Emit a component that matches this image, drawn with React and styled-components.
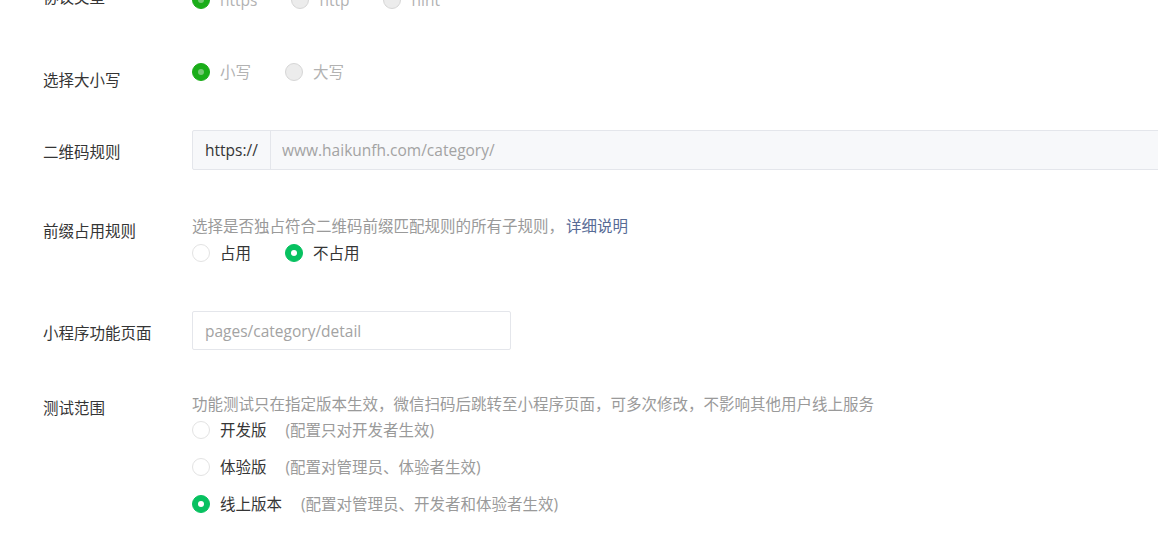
import styled, { createGlobalStyle } from "styled-components";

const GlobalStyle = createGlobalStyle`
  html, body {
    margin: 0;
    padding: 0;
    background: #fff;
    overflow: hidden;
  }
  body {
    font-family: "Open Sans", "Noto Sans CJK SC", sans-serif;
    font-size: 15.5px;
    color: #353535;
  }
`;

const Form = styled.div`
  margin-top: -11px;
  padding-left: 43px;
`;

const Row = styled.div`
  display: flex;
  align-items: flex-start;
  margin-bottom: ${(p) => p.$space || 0}px;
`;

const Label = styled.div`
  width: 149px;
  flex: none;
  line-height: 22px;
  margin-top: ${(p) => p.$offset || 0}px;
  color: #353535;
`;

const Control = styled.div`
  flex: 1;
  min-width: 0;
  display: flex;
  flex-direction: column;
`;

const Options = styled.div`
  display: flex;
  align-items: center;
  height: 22px;
  margin-top: ${(p) => p.$top || 0}px;
`;

const Option = styled.label`
  display: flex;
  align-items: center;
  margin-right: 34px;
  line-height: 22px;
  color: ${(p) => (p.$disabled ? "#b2b2b2" : "#353535")};
`;

const Dot = styled.span`
  box-sizing: border-box;
  position: relative;
  flex: none;
  width: 18px;
  height: 18px;
  margin-right: 10px;
  border-radius: 50%;
  border: 1px solid
    ${(p) =>
      p.$checked
        ? p.$disabled
          ? "#1aad19"
          : "#07c160"
        : p.$disabled
        ? "#d6d6d6"
        : "#e3e3e3"};
  background: ${(p) =>
    p.$checked
      ? p.$disabled
        ? "#1aad19"
        : "#07c160"
      : p.$disabled
      ? "#ececec"
      : "#fff"};

  &::after {
    content: "";
    display: ${(p) => (p.$checked ? "block" : "none")};
    position: absolute;
    left: 50%;
    top: 50%;
    width: 6px;
    height: 6px;
    margin: -3px 0 0 -3px;
    border-radius: 50%;
    background: ${(p) => (p.$disabled ? "#74c873" : "#fff")};
  }
`;

const Note = styled.span`
  margin-left: 19px;
  color: #9a9a9a;
`;

const Desc = styled.div`
  line-height: 22px;
  color: #9a9a9a;
`;

const Link = styled.a`
  margin-left: 2px;
  color: #576b95;
  text-decoration: none;
`;

const InputGroup = styled.div`
  box-sizing: border-box;
  display: flex;
  width: 1000px;
  height: 40px;
  border: 1px solid #e4e6eb;
  border-radius: 2px;
  background: #f7f8fa;
`;

const Prefix = styled.div`
  box-sizing: border-box;
  width: 78px;
  padding-left: 12px;
  display: flex;
  align-items: center;
  border-right: 1px solid #e4e6eb;
  color: #353535;
`;

const Field = styled.input`
  box-sizing: border-box;
  border: none;
  outline: none;
  background: transparent;
  font: inherit;
  color: #353535;
  padding: 0 11px;
  flex: 1;
  height: 100%;

  &::placeholder {
    color: #a3a3a3;
  }
`;

const TextInput = styled.input`
  box-sizing: border-box;
  width: 319px;
  height: 39px;
  padding: 0 12px;
  border: 1px solid #e4e6eb;
  border-radius: 2px;
  background: #fff;
  font: inherit;
  outline: none;

  &::placeholder {
    color: #a3a3a3;
  }
`;

const Radio = ({ checked, disabled, children, note }) => (
  <Option $disabled={disabled}>
    <Dot $checked={checked} $disabled={disabled} />
    {children}
    {note && <Note>{note}</Note>}
  </Option>
);

const scopes = [
  { name: "开发版", note: "(配置只对开发者生效)" },
  { name: "体验版", note: "(配置对管理员、体验者生效)" },
  { name: "线上版本", note: "(配置对管理员、开发者和体验者生效)", checked: true },
];

const App = () => (
  <>
    <GlobalStyle />
    <Form>
      <Row $space={50}>
        <Label $offset={-3}>协议类型</Label>
        <Control>
          <Options>
            <Radio checked disabled>https</Radio>
            <Radio disabled>http</Radio>
            <Radio disabled>hint</Radio>
          </Options>
        </Control>
      </Row>

      <Row $space={39}>
        <Label $offset={8}>选择大小写</Label>
        <Control>
          <Options>
            <Radio checked disabled>小写</Radio>
            <Radio disabled>大写</Radio>
          </Options>
        </Control>
      </Row>

      <Row $space={45}>
        <Label $offset={11}>二维码规则</Label>
        <Control>
          <InputGroup>
            <Prefix>https://</Prefix>
            <Field readOnly placeholder="www.haikunfh.com/category/" />
          </InputGroup>
        </Control>
      </Row>

      <Row $space={47}>
        <Label $offset={5}>前缀占用规则</Label>
        <Control>
          <Desc>
            选择是否独占符合二维码前缀匹配规则的所有子规则，
            <Link href="#">详细说明</Link>
          </Desc>
          <Options $top={5}>
            <Radio>占用</Radio>
            <Radio checked>不占用</Radio>
          </Options>
        </Control>
      </Row>

      <Row $space={43}>
        <Label $offset={11}>小程序功能页面</Label>
        <Control>
          <TextInput readOnly placeholder="pages/category/detail" />
        </Control>
      </Row>

      <Row>
        <Label $offset={4}>测试范围</Label>
        <Control>
          <Desc>
            功能测试只在指定版本生效，微信扫码后跳转至小程序页面，可多次修改，不影响其他用户线上服务
          </Desc>
          {scopes.map((s, i) => (
            <Options key={s.name} $top={i === 0 ? 4 : 15}>
              <Radio checked={s.checked} note={s.note}>
                {s.name}
              </Radio>
            </Options>
          ))}
        </Control>
      </Row>
    </Form>
  </>
);

export default App;
